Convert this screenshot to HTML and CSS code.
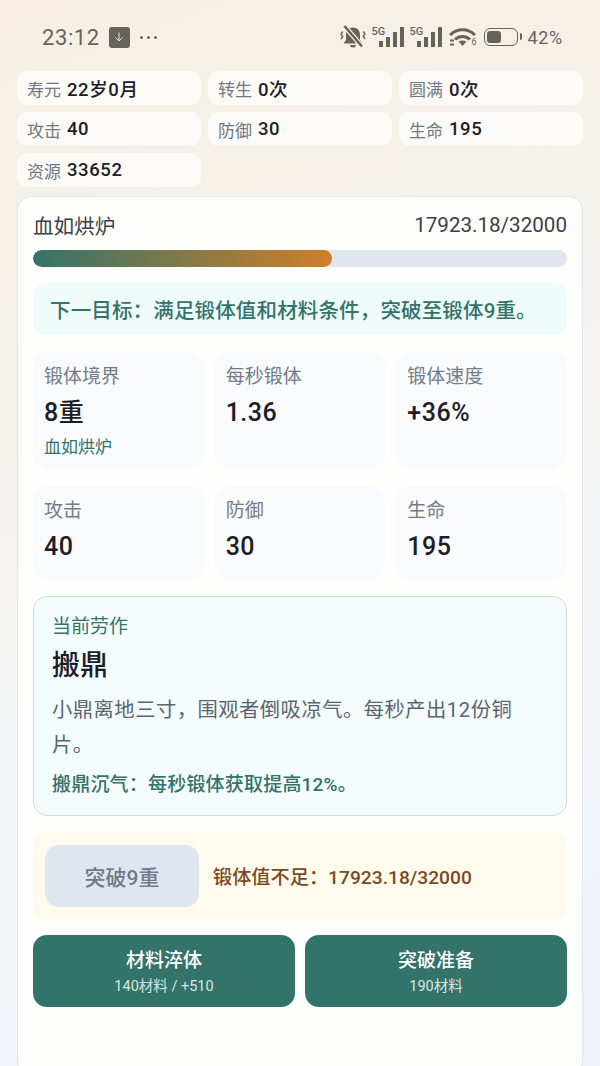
FILE: index.html
```html
<!DOCTYPE html>
<html lang="zh-CN">
<head>
    <meta charset="UTF-8">
    <meta name="viewport" content="width=device-width, initial-scale=1.0">
    <title>锻体</title>
    <link rel="stylesheet" href="styles.css">
</head>
<body>
    <div class="statusbar">
        <div class="status-left">
            <span class="time">23:12</span>
            <span class="dl-badge">
                <svg width="12" height="12" viewBox="0 0 12 12"><path d="M6 1.500V10M2.500 6.500 6 10l3.500-3.500" fill="none" stroke="#e4e2dc" stroke-width="1"/></svg>
            </span>
            <span class="dots"><i></i><i></i><i></i></span>
        </div>
        <div class="status-right">
            <svg class="bell" width="26" height="24" viewBox="0 0 26 24">
                <path d="M13 2.500c-4.500 0-7 3-7 7.500v5l-2.500 3.500h19L20 15v-5c0-4.500-2.500-7.500-7-7.500z" fill="#66635b"/>
                <path d="M10 20a3 2.500 0 0 0 6 0z" fill="#66635b"/>
                <path d="M4.500 1 22 21.500" stroke="#f4f0e8" stroke-width="5"/>
                <path d="M4.500 1 22 21.500" stroke="#66635b" stroke-width="2.500"/>
                <path d="M2.800 6.500 1 9l1.800 2.500L1 14M23.300 6.500 25 9l-1.700 2.500L25 14" fill="none" stroke="#66635b" stroke-width="1.400"/>
            </svg>
            <span class="net">
                <span class="net-label">5G</span>
                <span class="bars"><i class="b1"></i><i class="b2"></i><i class="b3"></i><i class="b4"></i></span>
            </span>
            <span class="net">
                <span class="net-label">5G</span>
                <span class="bars"><i class="b1"></i><i class="b2"></i><i class="b3"></i><i class="b4"></i></span>
            </span>
            <span class="wifi">
                <svg width="27" height="20" viewBox="0 0 27 20">
                    <path d="M1 8C8 1 19 1 26 8" fill="none" stroke="#66635b" stroke-width="3"/>
                    <path d="M6 12.500c4.500-4 10.500-4 15 0" fill="none" stroke="#66635b" stroke-width="3"/>
                    <path d="M9.500 14.500c2.500-1.500 5.500-1.500 8 0l-4 4.500z" fill="#66635b"/>
                    <path d="M1 13.500h4M1 17.500h4" stroke="#66635b" stroke-width="2"/>
                </svg>
                <span class="wifi-six">6</span>
            </span>
            <span class="battery"><i></i></span>
            <span class="percent">42%</span>
        </div>
    </div>

    <div class="chips">
        <div class="chip"><span>寿元</span><b>22岁0月</b></div>
        <div class="chip"><span>转生</span><b>0次</b></div>
        <div class="chip"><span>圆满</span><b>0次</b></div>
        <div class="chip"><span>攻击</span><b>40</b></div>
        <div class="chip"><span>防御</span><b>30</b></div>
        <div class="chip"><span>生命</span><b>195</b></div>
        <div class="chip"><span>资源</span><b>33652</b></div>
    </div>

    <div class="card">
        <div class="progress-head">
            <span>血如烘炉</span>
            <span>17923.18/32000</span>
        </div>
        <div class="progress"><div class="progress-fill" style="width: 56%"></div></div>

        <div class="goal">下一目标：满足锻体值和材料条件，突破至锻体9重。</div>

        <div class="stats">
            <div class="stat stat-tall">
                <div class="stat-label">锻体境界</div>
                <div class="stat-value">8重</div>
                <div class="stat-note">血如烘炉</div>
            </div>
            <div class="stat stat-tall">
                <div class="stat-label">每秒锻体</div>
                <div class="stat-value">1.36</div>
            </div>
            <div class="stat stat-tall">
                <div class="stat-label">锻体速度</div>
                <div class="stat-value">+36%</div>
            </div>
            <div class="stat">
                <div class="stat-label">攻击</div>
                <div class="stat-value">40</div>
            </div>
            <div class="stat">
                <div class="stat-label">防御</div>
                <div class="stat-value">30</div>
            </div>
            <div class="stat">
                <div class="stat-label">生命</div>
                <div class="stat-value">195</div>
            </div>
        </div>

        <div class="labor">
            <div class="labor-tag">当前劳作</div>
            <h2>搬鼎</h2>
            <p>小鼎离地三寸，围观者倒吸凉气。每秒产出12份铜片。</p>
            <div class="labor-bonus">搬鼎沉气：每秒锻体获取提高12%。</div>
        </div>

        <div class="breakthrough">
            <button class="btn-disabled">突破9重</button>
            <span>锻体值不足：17923.18/32000</span>
        </div>

        <div class="actions">
            <button class="btn">材料淬体<small>140材料 / +510</small></button>
            <button class="btn">突破准备<small>190材料</small></button>
        </div>
    </div>
</body>
</html>
```

FILE: styles.css
```css
* {
    box-sizing: border-box;
}

html, body {
    height: 1066px;
    overflow: hidden;
}

body {
    margin: 0;
    padding: 0 17px;
    font-family: Roboto, "Noto Sans CJK SC", sans-serif;
    color: #1c2026;
    background: linear-gradient(160deg, #f6efe2 0%, #f5f2ec 30%, #f2f4f7 65%, #eef2f7 100%);
}

/* status bar */
.statusbar {
    height: 71px;
    margin: 0 -17px;
    padding: 3px 37px 0 42px;
    display: flex;
    justify-content: space-between;
    align-items: center;
    color: #66635b;
}

.status-left {
    display: flex;
    align-items: center;
}

.time {
    font-size: 22px;
    letter-spacing: 0.6px;
}

.dl-badge {
    width: 21px;
    height: 21px;
    margin-left: 9px;
    border-radius: 3px;
    background-color: #66635b;
    display: flex;
    justify-content: center;
    align-items: center;
}

.dots {
    margin-left: 10px;
    display: flex;
    gap: 4px;
}

.dots i {
    width: 3px;
    height: 3px;
    border-radius: 50%;
    background-color: #66635b;
}

.status-right {
    display: flex;
    align-items: center;
}

.net {
    display: flex;
    align-items: flex-end;
    height: 20px;
    margin-left: 5px;
}

.net-label {
    width: 15px;
    font-size: 11px;
    font-weight: 500;
    line-height: 10px;
    align-self: flex-start;
}

.bars {
    display: flex;
    align-items: flex-end;
    gap: 3px;
    margin-left: -7px;
}

.bars i {
    width: 4px;
    background-color: #66635b;
}

.b1 { height: 6px; }
.b2 { height: 10px; }
.b3 { height: 15px; }
.b4 { height: 20px; }

.wifi {
    position: relative;
    margin-left: 7px;
    display: flex;
}

.wifi-six {
    position: absolute;
    right: 0;
    bottom: 0;
    font-size: 9px;
    line-height: 9px;
}

.battery {
    width: 34px;
    height: 18px;
    margin-left: 8px;
    padding: 2px;
    border: 1.500px solid #66635b;
    border-radius: 6px;
    display: flex;
    position: relative;
}

.battery::after {
    content: "";
    position: absolute;
    right: -5px;
    top: 4px;
    width: 2px;
    height: 7px;
    border-radius: 0 2px 2px 0;
    background-color: #66635b;
}

.battery i {
    width: 14px;
    border-radius: 3px;
    background-color: #66635b;
}

.percent {
    margin-left: 9px;
    font-size: 18px;
    letter-spacing: 0.7px;
}

/* chips on top */
.chips {
    display: grid;
    grid-template-columns: repeat(3, 1fr);
    gap: 7px;
}

.chip {
    height: 34px;
    padding: 0 10px;
    display: flex;
    align-items: center;
    gap: 6px;
    border-radius: 10px;
    background-color: rgba(255, 255, 255, 0.65);
    font-size: 17px;
}

.chip span {
    color: #6f7884;
}

.chip b {
    font-size: 18.500px;
    font-weight: 500;
    letter-spacing: 0.6px;
    color: #1c2026;
}

/* main card */
.card {
    margin-top: 9px;
    height: 880px;
    padding: 15px;
    border: 1px solid #e3e6ea;
    border-radius: 14px;
    background-color: #fefefd;
}

.progress-head {
    height: 26px;
    display: flex;
    justify-content: space-between;
    align-items: center;
    font-size: 20.600px;
    color: #3a4048;
}

.progress {
    margin-top: 12px;
    height: 17px;
    border-radius: 9px;
    background-color: #e0e7ee;
    overflow: hidden;
}

.progress-fill {
    height: 100%;
    border-radius: 9px;
    background: linear-gradient(90deg, #34736b, #d07f27);
}

.goal {
    margin-top: 16px;
    height: 52px;
    padding: 0 17px;
    display: flex;
    align-items: center;
    border-radius: 12px;
    background-color: #effafb;
    color: #33736a;
    font-size: 20.500px;
    font-weight: 500;
    letter-spacing: 0.15px;
    white-space: nowrap;
}

.stats {
    margin-top: 17px;
    display: grid;
    grid-template-columns: repeat(3, 1fr);
    gap: 18px 11px;
}

.stat {
    height: 93px;
    padding: 12px 11px;
    border-radius: 14px;
    background-color: #f8fafc;
}

.stat-tall {
    height: 116px;
}

.stat-label {
    font-size: 19px;
    line-height: 26px;
    color: #747c88;
}

.stat-value {
    margin-top: 7px;
    font-size: 25px;
    line-height: 32px;
    font-weight: 500;
    letter-spacing: 0.5px;
    color: #1c2026;
}

.stat-note {
    margin-top: 6px;
    font-size: 17px;
    line-height: 24px;
    color: #33736a;
}

.labor {
    margin-top: 17px;
    height: 220px;
    padding: 17px 18px;
    border: 1.500px solid #c8dfdb;
    border-radius: 14px;
    background-color: #f3fbfd;
}

.labor-tag {
    font-size: 19px;
    line-height: 26px;
    color: #33736a;
}

.labor h2 {
    margin: 7px 0 0;
    font-size: 28px;
    line-height: 38px;
    font-weight: 500;
    color: #1c2026;
}

.labor p {
    margin: 8px 0 0;
    padding-right: 12px;
    font-size: 20.300px;
    line-height: 35px;
    letter-spacing: 0.5px;
    color: #5b6470;
}

.labor-bonus {
    margin-top: 9px;
    font-size: 19px;
    line-height: 26px;
    font-weight: 500;
    letter-spacing: 0.2px;
    color: #33736a;
}

.breakthrough {
    margin-top: 16px;
    height: 88px;
    padding: 0 12px;
    display: flex;
    align-items: center;
    gap: 14px;
    border-radius: 14px;
    background-color: #fefaec;
    color: #7c4a22;
    font-size: 19.200px;
    font-weight: 500;
}

button {
    font-family: inherit;
    border: none;
    cursor: pointer;
}

.btn-disabled {
    width: 154px;
    height: 62px;
    border-radius: 14px;
    background-color: #e0e6ef;
    color: #727a88;
    font-size: 21px;
    font-weight: 500;
}

.actions {
    margin-top: 15px;
    display: grid;
    grid-template-columns: 1fr 1fr;
    gap: 10px;
}

.btn {
    height: 72px;
    padding: 4px 0 0;
    display: flex;
    flex-direction: column;
    align-items: center;
    justify-content: center;
    border-radius: 14px;
    background-color: #33736a;
    color: #fff;
    font-size: 19px;
    line-height: 28px;
    font-weight: 500;
}

.btn small {
    font-size: 14.500px;
    line-height: 24px;
    font-weight: 400;
    color: #d5e6e3;
}
```
